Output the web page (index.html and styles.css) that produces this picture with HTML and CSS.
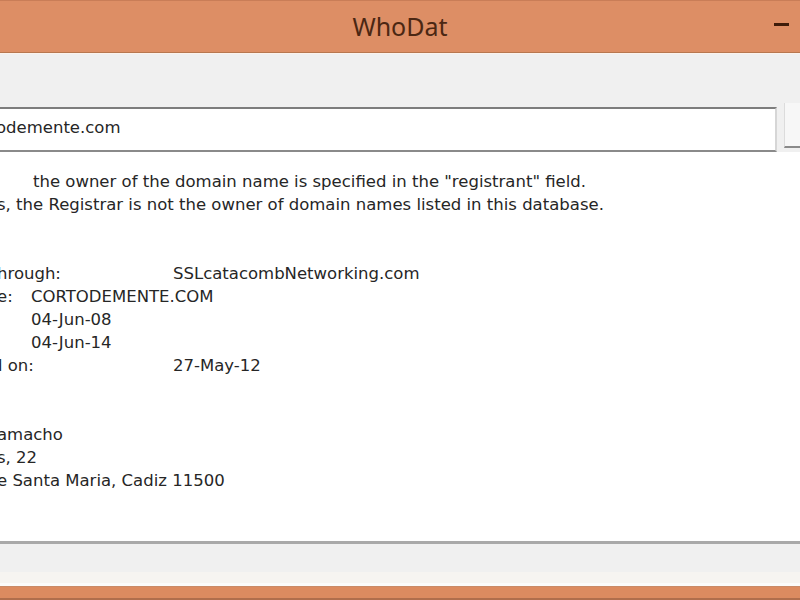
FILE: index.html
```html
<!DOCTYPE html>
<html>
<head>
  <meta charset="UTF-8">
  <meta name="viewport" content="width=device-width, initial-scale=1.0">
  <title>WhoDat</title>
  <link rel="stylesheet" href="styles.css">
</head>
<body>
  <div class="window">
    <div class="titlebar">
      <div class="title">WhoDat</div>
      <div class="minimize"></div>
    </div>

    <div class="search">
      <div class="field"><span class="field-text">odemente.com</span></div>
      <div class="lookup"></div>
    </div>

    <div class="output">
      <div class="lines">
        <div class="line indent">the owner of the domain name is specified in the "registrant" field.</div>
        <div class="line">s, the Registrar is not the owner of domain names listed in this database.</div>
        <div class="line"></div>
        <div class="line"></div>
        <div class="line"><span class="tab-l">hrough:</span>SSLcatacombNetworking.com</div>
        <div class="line"><span class="tab-s">e:</span>CORTODEMENTE.COM</div>
        <div class="line"><span class="tab-s"></span>04-Jun-08</div>
        <div class="line"><span class="tab-s"></span>04-Jun-14</div>
        <div class="line"><span class="tab-l cut">d on:</span>27-May-12</div>
        <div class="line"></div>
        <div class="line"></div>
        <div class="line">amacho</div>
        <div class="line">s, 22</div>
        <div class="line">e Santa Maria, Cadiz 11500</div>
      </div>
    </div>

    <div class="statusbar"></div>
    <div class="taskbar"></div>
  </div>
</body>
</html>
```

FILE: styles.css
```css
html, body {
  margin: 0;
  height: 100%;
}

body {
  width: 800px;
  height: 600px;
  overflow: hidden;
  background-color: #f0f0f0;
  font-family: 'DejaVu Sans', Verdana, sans-serif;
  color: #262626;
}

.window {
  display: flex;
  flex-direction: column;
  height: 600px;
}

/* Title bar */
.titlebar {
  background-color: #dd8e65;
  border-top: 1px solid #c97d57;
  border-bottom: 1px solid #b8774f;
  box-sizing: border-box;
  height: 53px;
  display: flex;
  align-items: center;
  justify-content: center;
  position: relative;
}

.title {
  font-family: 'Noto Sans', 'Open Sans', sans-serif;
  font-size: 25px;
  color: #4b2713;
  margin-top: -1px;
}

.minimize {
  position: absolute;
  right: 11px;
  top: 22px;
  width: 15px;
  height: 3px;
  background-color: #3e1c0a;
}

/* Search row */
.search {
  display: flex;
  gap: 7px;
  padding-top: 53px;
  background-color: #f0f0f0;
  border-top: 1px solid #fbf3ee;
}

.field {
  flex: 1;
  height: 41px;
  margin-left: -20px;
  padding-left: 18px;
  padding-bottom: 4px;
  box-sizing: border-box;
  height: 45px;
  background-color: #ffffff;
  border-top: 2px solid #7d7d7d;
  border-bottom: 2px solid #8a8a8a;
  border-right: 2px solid #d6d6d6;
  display: flex;
  align-items: center;
  font-size: 16.5px;
  overflow: hidden;
}

.field-text {
  margin-left: -2px;
}

.lookup {
  width: 15px;
  height: 43px;
  margin-top: -4px;
  background-color: #f7f7f7;
  border-left: 1px solid #dcdcdc;
  border-bottom: 2px solid #8a8a8a;
}

/* Whois output */
.output {
  flex: 1;
  background-color: #ffffff;
  padding-top: 18px;
  overflow: hidden;
}

.lines {
  margin-left: -3px;
  font-size: 16.5px;
  white-space: nowrap;
}

.line {
  height: 23px;
  line-height: 23px;
  display: flex;
}

.indent {
  padding-left: 36px;
}

.tab-s {
  width: 34px;
  flex-shrink: 0;
}

.tab-l {
  width: 176px;
  flex-shrink: 0;
}

.cut {
  margin-left: -5px;
  width: 181px;
}

/* Bottom strip */
.statusbar {
  background-color: #f0f0f0;
  border-top: 3px solid #a9a9a9;
  border-bottom: 3px solid #fbfbfb;
  box-shadow: inset 0 -11px 0 #f6f4f1;
  height: 45px;
  box-sizing: border-box;
}

.taskbar {
  height: 14px;
  background-color: #dc8b60;
  border-top: 1px solid #c98a68;
  border-bottom: 2px solid #b06e4c;
  box-sizing: border-box;
}
```
